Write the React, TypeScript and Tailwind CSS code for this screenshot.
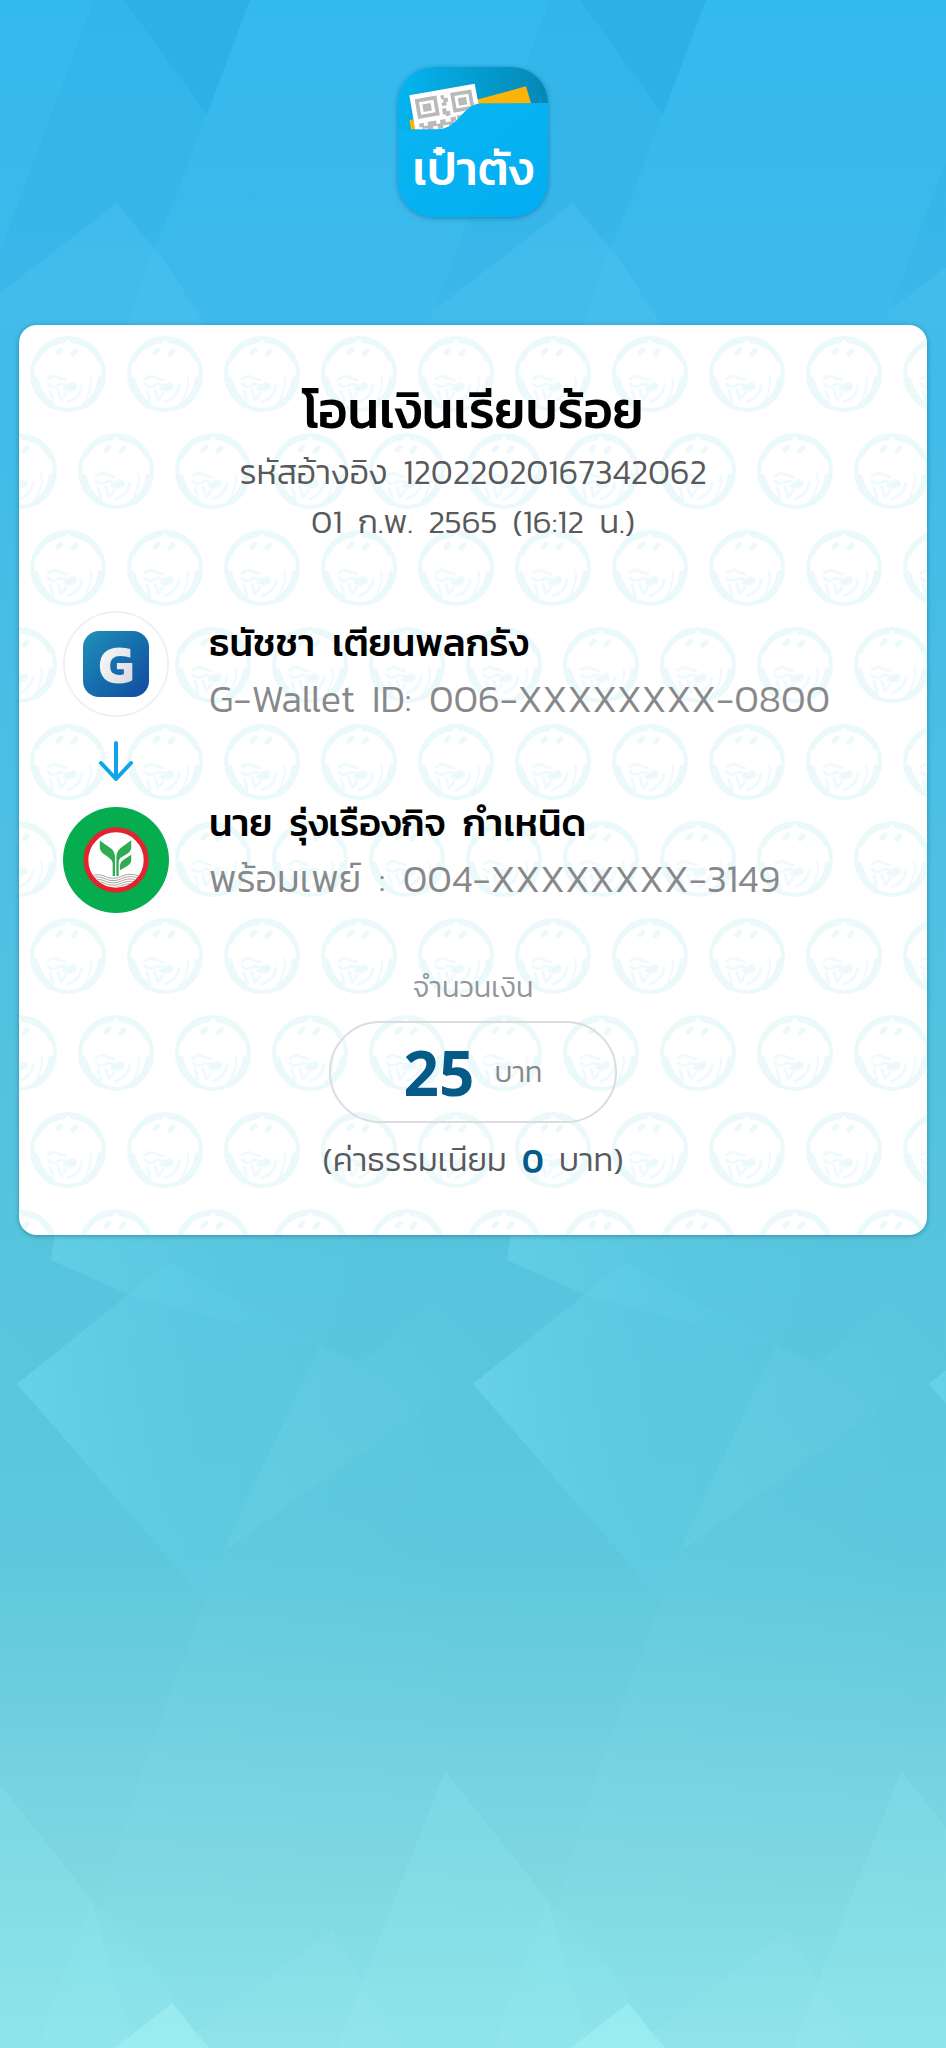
import { useId } from 'react';

type Party = { name: string; account: string };

const sender: Party = { name: 'ธนัชชา\u00a0 เตียนพลกรัง', account: 'G-Wallet\u00a0 ID:\u00a0 006-XXXXXXXX-0800' };
const receiver: Party = { name: 'นาย\u00a0 รุ่งเรืองกิจ\u00a0 กำเหนิด', account: 'พร้อมเพย์\u00a0 :\u00a0 004-XXXXXXXX-3149' };

function FacetColumn() {
  return (
    <g>
      {/* upper facets */}
      <path d="M94 0H250L127 325L100 420H-60L-22 310Z" fill="url(#shade)" opacity=".14" />
      <path d="M124 0H250L207 115Z" fill="#1d9fd6" opacity=".22" />
      <path d="M117 203L155 250L127 325L100 420H-60L-22 310Z" fill="url(#glow)" opacity=".24" />
      <path d="M155 245L205 325L250 420H100L127 325Z" fill="url(#glow)" opacity=".22" />
      {/* middle facets */}
      <path d="M60 1200H375L356 1254L320 1346L130 1295L51 1260Z" fill="url(#facetFade)" opacity=".6" />
      <path d="M169 1262L320 1346L223 1552L205 1600L17 1384Z" fill="url(#facetFade)" opacity=".8" />
      <path d="M434 1303L489 1362L223 1552L320 1346L362 1362Z" fill="url(#facetDown)" opacity=".6" />
      <path d="M223 1552L320 1346L420 1400L470 1900L40 2100L145 1762Z" fill="url(#facetDown)" opacity=".5" />
      {/* lower facets */}
      <path d="M445 1771L546 1898L590 2048H338L344 2028Z" fill="url(#peak)" />
      <path d="M93 1900L157 1973L196 2033L180 2048H40L51 2006Z" fill="url(#peak)" opacity=".8" />
      <path d="M332 1930L400 2048H180L196 2033Z" fill="#a5f1f1" opacity=".12" />
      <path d="M172 2003L196 2033L210 2048H115Z" fill="#a9f7f8" opacity=".45" />
    </g>
  );
}

function Backdrop() {
  return (
    <svg aria-hidden="true" viewBox="0 0 946 2048" preserveAspectRatio="xMidYMin slice" className="absolute inset-0 -z-10 h-full w-full">
      <defs>
        <linearGradient id="sky" x1="0" y1="0" x2="0" y2="1">
          <stop offset="0" stopColor="#34b9ef" />
          <stop offset=".17" stopColor="#3fbaea" />
          <stop offset=".38" stopColor="#4bbfe4" />
          <stop offset=".6" stopColor="#57c4de" />
          <stop offset=".76" stopColor="#5dc8dd" />
          <stop offset=".84" stopColor="#70cfdf" />
          <stop offset=".92" stopColor="#7ed8e2" />
          <stop offset="1" stopColor="#8de2e9" />
        </linearGradient>
        <linearGradient id="shade" x1="0" y1="0" x2="0" y2="1">
          <stop offset=".5" stopColor="#1d9fd6" />
          <stop offset="1" stopColor="#1d9fd6" stopOpacity="0" />
        </linearGradient>
        <linearGradient id="glow" x1="0" y1="0" x2="0" y2="1">
          <stop offset=".4" stopColor="#5ccbf2" />
          <stop offset="1" stopColor="#5ccbf2" stopOpacity="0" />
        </linearGradient>
        <linearGradient id="facetFade" x1="0" y1="0" x2="1" y2="0">
          <stop offset="0" stopColor="#70daee" stopOpacity=".7" />
          <stop offset=".6" stopColor="#62d0ea" stopOpacity=".3" />
          <stop offset="1" stopColor="#62d0ea" stopOpacity=".15" />
        </linearGradient>
        <linearGradient id="facetDown" x1="0" y1="0" x2="1" y2="0">
          <stop offset="0" stopColor="#8ae6f2" stopOpacity=".2" />
          <stop offset="1" stopColor="#8ae6f2" stopOpacity="0.02" />
        </linearGradient>
        <linearGradient id="peak" x1="0" y1="0" x2="0" y2="1">
          <stop offset="0" stopColor="#84e4f0" stopOpacity=".3" />
          <stop offset="1" stopColor="#9beeee" stopOpacity=".2" />
        </linearGradient>
      </defs>
      <rect width="946" height="2048" fill="url(#sky)" />
      <g transform="translate(-456 0)"><FacetColumn /></g>
      <FacetColumn />
      <g transform="translate(456 0)"><FacetColumn /></g>
      <g transform="translate(912 0)"><FacetColumn /></g>
    </svg>
  );
}

function Emblem() {
  return (
    <g fill="none" stroke="#ebf9fb" strokeLinecap="round" strokeLinejoin="round">
      <circle r="36" strokeWidth="4" />
      <path d="M-31 -14C-26 -25 -17 -31 -4 -33M31 -14C26 -25 17 -31 4 -33" strokeWidth="4" />
      <path d="M-33 6C-30 17 -26 25 -17 31M33 6C32 16 27 25 17 31" strokeWidth="7" />
      <g stroke="#f0fafc">
        <path d="M22 3C25 9 22 17 18 26" strokeWidth="2" />
        <path d="M-20 5C-16 2 -13 1 -9 4L-2 6M-20 10C-17 14 -12 13 -8 10L2 12M-18 17L-15 27M-10 16L-7 26M-2 19L-5 24M14 12C13 20 8 25 0 28" strokeWidth="3" />
        <path d="M4 9C8 9 9 12 7 15L1 17L-5 15L-2 12Z" fill="#ebf9fb" strokeWidth="2" />
      </g>
      <path d="M-10 -21L-7 -24M5 -20L8 -23" strokeWidth="5" />
    </g>
  );
}

function Watermark() {
  const id = useId();
  return (
    <svg aria-hidden="true" className="absolute inset-0 h-full w-full">
      <defs>
        <pattern id={id} width="97" height="194" patternUnits="userSpaceOnUse">
          <g transform="translate(49 49)"><Emblem /></g>
          <g transform="translate(0 146)"><Emblem /></g>
          <g transform="translate(97 146)"><Emblem /></g>
        </pattern>
      </defs>
      <rect width="100%" height="100%" fill={`url(#${id})`} />
    </svg>
  );
}

function AppLogo() {
  return (
    <div className="relative flex h-[150px] w-[150px] items-end justify-center overflow-hidden rounded-[36px] shadow-[0_1px_5px_rgba(0,80,130,0.5)]">
      <svg aria-hidden="true" viewBox="0 0 450 450" className="absolute inset-0 h-full w-full">
        <defs>
          <linearGradient id="pocketBack" x1="0" y1=".3" x2="1" y2=".35">
            <stop offset="0" stopColor="#04b4ee" />
            <stop offset="1" stopColor="#0487b4" />
          </linearGradient>
          <linearGradient id="pocket" x1="0" y1="0" x2="1" y2="1">
            <stop offset="0" stopColor="#0bb5f2" />
            <stop offset="1" stopColor="#02aef2" />
          </linearGradient>
        </defs>
        <rect width="450" height="450" fill="url(#pocketBack)" />
        <path d="M34 160L44 157L60 190H40Z" fill="#fdb408" />
        <path d="M236 98L384 58L400 112H230Z" fill="#fdb408" />
        <path d="M34 85L230 50L243 118L150 190H52Z" fill="#fff" />
        <g transform="translate(50 97) rotate(-10)">
          <path d="M0 0H66V60H0ZM11 11V49H55V11Z" fill="#b9b9b9" fillRule="evenodd" />
          <rect x="20" y="19" width="25" height="23" fill="#b9b9b9" />
          <path d="M108 0H172V60H108ZM119 11V49H161V11Z" fill="#b9b9b9" fillRule="evenodd" />
          <rect x="128" y="19" width="25" height="23" fill="#b9b9b9" />
          <path d="M78 2H88V12H98V24H92V34H78V24H84V14H78ZM76 42H88V52H98V66H84V60H76ZM0 74H14V84H26V74H52V84H64V74H80V84H96V72H112V84H104V96H88V92H70V100H54V90H40V98H22V92H8V86H0ZM116 70H150V82H116Z" fill="#b9b9b9" />
        </g>
        <path d="M0 187H112C150 187 163 172 185 150C206 127 222 111 250 109L450 108V450H0Z" fill="url(#pocket)" />
      </svg>
      <span className="relative pb-4 text-[47px] leading-[64px] font-medium text-white">เป๋าตัง</span>
    </div>
  );
}

function WalletBadge() {
  return (
    <div className="flex size-[106px] shrink-0 items-center justify-center rounded-full border-2 border-[#f1f1f4] bg-white">
      <div className="flex size-[66px] items-center justify-center rounded-2xl bg-linear-to-br from-[#2191b8] to-[#1449a0]">
        <span className="bg-linear-to-br from-white to-[#d5d6de] bg-clip-text text-[54px] leading-[64px] font-bold text-transparent">G</span>
      </div>
    </div>
  );
}

function BankBadge() {
  return (
    <svg role="img" aria-label="KBank" viewBox="10 24 320 320" className="size-[106px] shrink-0">
      <circle cx="170" cy="184" r="160" fill="#06ad4f" />
      <circle cx="170" cy="184" r="91" fill="#fff" stroke="#e2242f" strokeWidth="15" />
      <clipPath id="bankInner"><circle cx="170" cy="184" r="82" /></clipPath>
      <g clipPath="url(#bankInner)" fill="none" stroke="#a9a19c" strokeWidth="3">
        {[0, 7, 14, 21, 28].map((dy) => (
          <path key={dy} transform={`translate(0 ${dy})`} d="M84 238C100 226 120 226 138 234S172 240 190 232S232 226 256 240" />
        ))}
      </g>
      <path d="M121 125L155 149Q166 157 167 174V232H160V192Q157 182 145 174L132 165Q121 156 121 144Z" fill="#2fab52" />
      <path d="M216 124V148Q215 158 204 165L184 177Q178 182 178 192V232H171V176Q172 157 184 148Z" fill="#2fab52" />
      <path d="M216 168V188Q214 197 203 203L182 215V199Q183 189 193 183Z" fill="#2fab52" />
    </svg>
  );
}

function PartyText({ party }: { party: Party }) {
  return (
    <div className="flex min-w-0 flex-col gap-2 text-[38px] leading-[48px]">
      <p className="font-medium text-black">{party.name}</p>
      <p className="font-light text-[#87888a]">{party.account}</p>
    </div>
  );
}

export default function App() {
  return (
    <main className="relative isolate flex min-h-screen flex-col items-center overflow-hidden px-[19px] pt-[67px] font-[Kanit,'Noto_Sans_Thai','Noto_Sans',sans-serif]">
      <Backdrop />
      <AppLogo />
      <section className="relative mt-[108px] w-full overflow-hidden rounded-[18px] bg-white shadow-[0_1px_5px_rgba(0,70,100,0.45)]">
        <Watermark />
        <div className="relative px-11 pt-[53px] pb-[50px]">
          <header className="flex flex-col items-center text-center">
            <h1 className="mb-[5px] text-[51px] leading-[64px] font-medium text-black">โอนเงินเรียบร้อย</h1>
            <p className="text-[34px] leading-[50px] font-light text-[#58595b]">รหัสอ้างอิง&nbsp; 12022020167342062</p>
            <p className="text-[33px] leading-[50px] font-light text-[#58595b]">01&nbsp; ก.พ.&nbsp; 2565&nbsp; (16:12&nbsp; น.)</p>
          </header>

          <div className="mt-16">
            <div className="flex items-start gap-10">
              <WalletBadge />
              <div className="pt-2"><PartyText party={sender} /></div>
            </div>
            <div className="flex h-[76px] w-[106px] items-center justify-center">
              <svg aria-hidden="true" viewBox="0 0 36 40" className="h-10 w-9" fill="none" stroke="#12a3e8" strokeWidth="4" strokeLinecap="round" strokeLinejoin="round">
                <path d="M18 2V37M3 22L18 38L33 22" />
              </svg>
            </div>
            <div className="flex items-start gap-10">
              <div className="pt-2"><BankBadge /></div>
              <PartyText party={receiver} />
            </div>
          </div>

          <div className="mt-[54px] flex flex-col items-center">
            <p className="text-[29px] leading-10 font-light text-[#949599]">จำนวนเงิน</p>
            <div className="mt-[14px] flex h-[102px] w-[288px] items-center justify-center gap-5 rounded-full border-2 border-[#dcdce0]">
              <span className="font-['Noto_Sans',sans-serif] text-[62px] leading-[64px] font-bold text-[#055a87]">25</span>
              <span className="text-[29px] leading-10 font-light text-[#87888a]">บาท</span>
            </div>
            <p className="mt-3 text-[33px] leading-[50px] font-light text-[#58595b]">
              (ค่าธรรมเนียม&nbsp; <span className="font-medium text-[#055a87]">0</span>&nbsp; บาท)
            </p>
          </div>
        </div>
      </section>
    </main>
  );
}
